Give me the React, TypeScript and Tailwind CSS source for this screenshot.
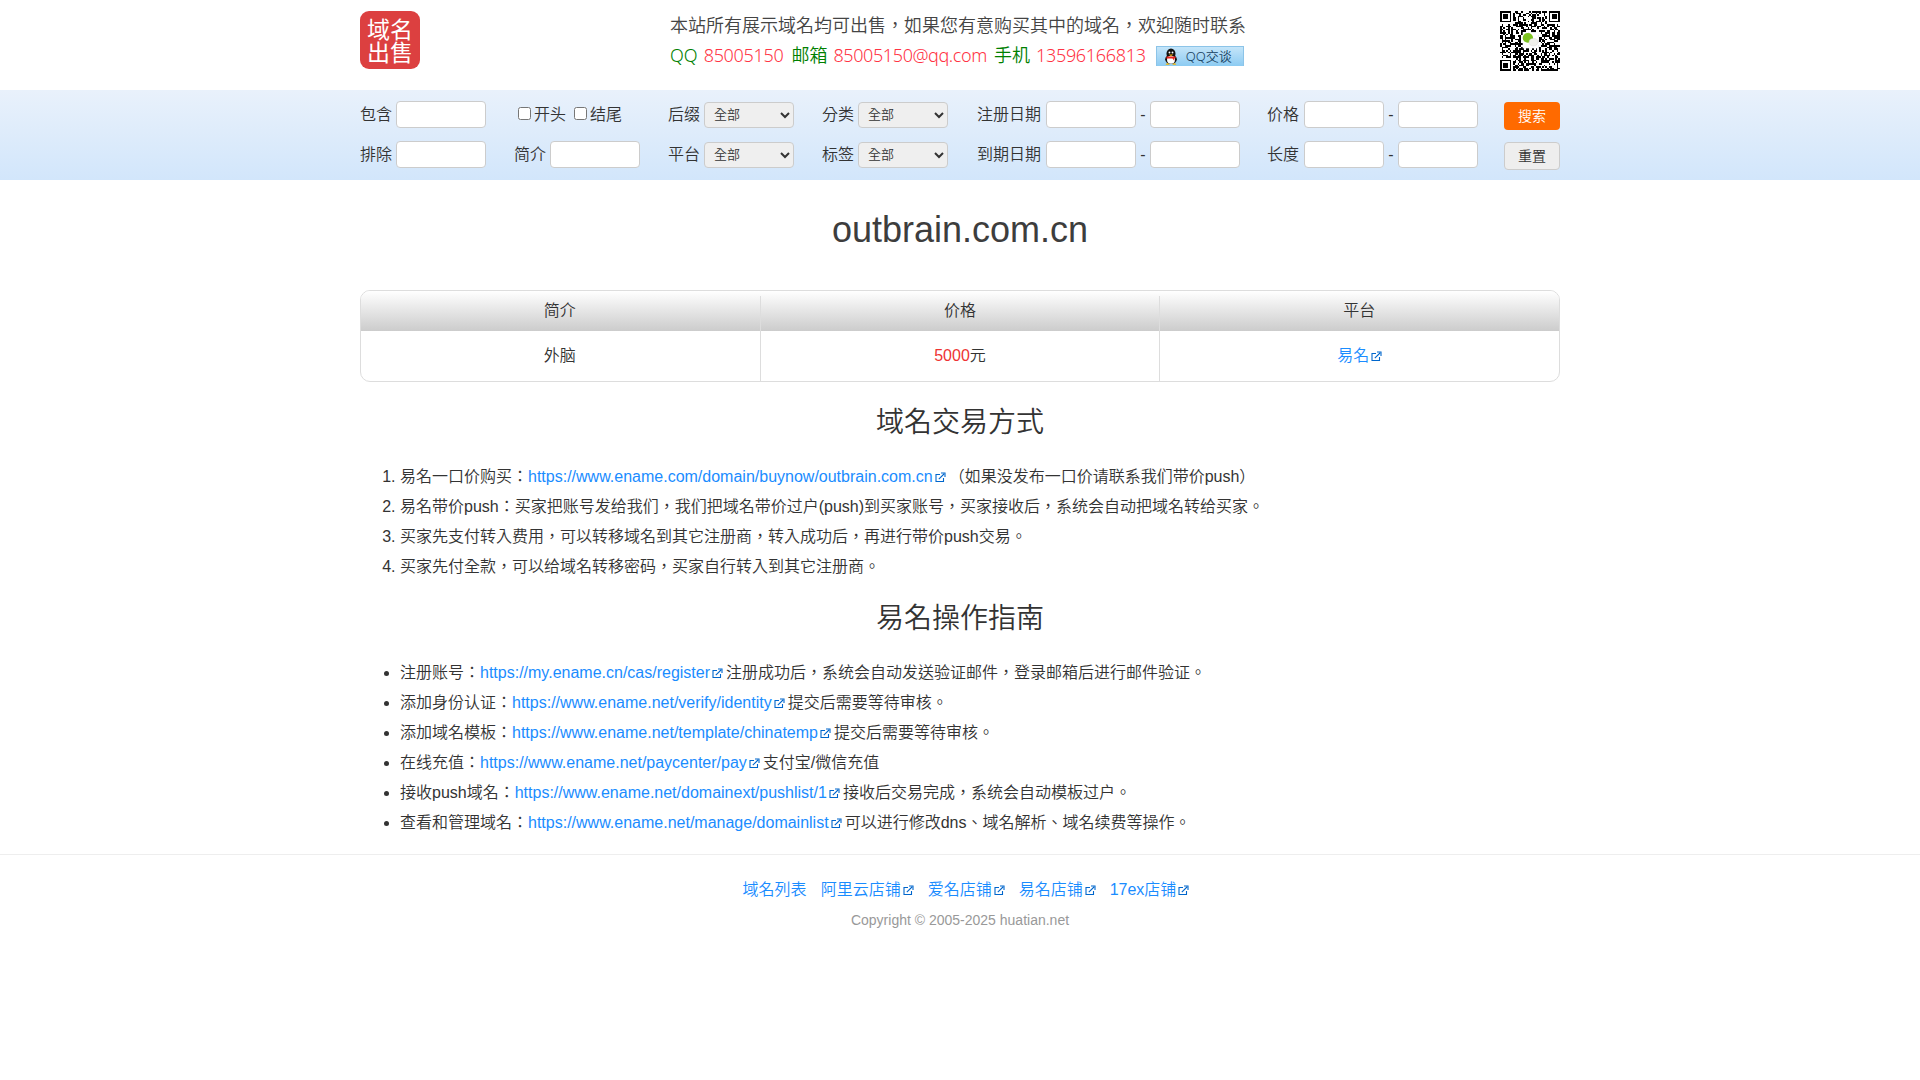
import type { ReactNode } from "react";

const cjk = "font-['Liberation_Sans','Noto_Sans_CJK_TC',sans-serif]";

function ExternalIcon() {
  return (
    <svg viewBox="0 0 11 11" className="inline-block w-[11px] h-[11px] ml-[2px] mr-[3px] align-[-1px]" fill="none" stroke="#0066cc">
      <path d="M5 2.5H1V9.5H8.5V6" strokeWidth="1.1" />
      <path d="M3.8 7.2L9 2M6 1H10V5" strokeWidth="1.1" />
    </svg>
  );
}

function Ext({ href, children }: { href?: string; children: ReactNode }) {
  return (
    <a href={href ?? "#"} className="text-[#1a8cff]">
      {children}
      <ExternalIcon />
    </a>
  );
}

function Field({ className }: { className?: string }) {
  return <input type="text" className={`shrink-0 h-[27px] bg-white border border-[#ccc] rounded-[4px] ${className ?? "w-[90px]"}`} />;
}

function Pick() {
  return (
    <select className="shrink-0 w-[90px] h-[26px] bg-[#efefef] border border-[#ccc] rounded-[4px] text-[13px] text-[#333] pl-[5px]">
      <option>全部</option>
    </select>
  );
}

function Label({ children }: { children: ReactNode }) {
  return <span className="mr-1 whitespace-nowrap">{children}</span>;
}

function Dash() {
  return <span className="w-[14px] text-center shrink-0">-</span>;
}

// deterministic fake QR modules, the real one is a picture
function qrPath() {
  const n = 37;
  let d = "";
  let seed = 20250;
  const inFinder = (x: number, y: number) =>
    (x < 8 && y < 8) || (x >= n - 8 && y < 8) || (x < 8 && y >= n - 8);
  for (let y = 0; y < n; y++) {
    for (let x = 0; x < n; x++) {
      seed = (seed * 1103515245 + 12345) & 0x7fffffff;
      if (!inFinder(x, y) && (seed >> 16) % 100 < 52) d += `M${x} ${y}h1v1h-1z`;
    }
  }
  return d;
}

function Finder({ x, y }: { x: number; y: number }) {
  return (
    <g>
      <rect x={x + 0.5} y={y + 0.5} width="6" height="6" fill="none" stroke="#000" />
      <rect x={x + 2} y={y + 2} width="3" height="3" fill="#000" />
    </g>
  );
}

function QrCode() {
  return (
    <svg viewBox="0 0 37 37" className="w-[60px] h-[60px] mt-[11px]" shapeRendering="crispEdges">
      <path d={qrPath()} fill="#000" />
      <Finder x={0} y={0} />
      <Finder x={30} y={0} />
      <Finder x={0} y={30} />
      <g shapeRendering="auto">
        <rect x="14" y="13" width="10" height="10" fill="#fff" />
        <ellipse cx="17.2" cy="16.6" rx="3.2" ry="3" fill="#7cc31f" />
        <ellipse cx="20.6" cy="19.2" rx="2.7" ry="2.3" fill="#f1f1ec" stroke="#ccc" strokeWidth="0.2" />
      </g>
    </svg>
  );
}

function Penguin() {
  return (
    <svg viewBox="0 0 16 18" className="w-[16px] h-[17px] shrink-0">
      <ellipse cx="8" cy="6" rx="4.8" ry="5.6" fill="#111" />
      <ellipse cx="8" cy="12" rx="6.2" ry="5" fill="#111" />
      <ellipse cx="8" cy="12.5" rx="4.2" ry="4.2" fill="#fff" />
      <circle cx="6.4" cy="4.8" r="1" fill="#fff" />
      <circle cx="9.6" cy="4.8" r="1" fill="#fff" />
      <path d="M5.5 6.8H10.5L8 8.4Z" fill="#f5b400" />
      <path d="M3.2 9H12.8L13 10.6L11.4 11V13.6L9.6 11H3.2Z" fill="#e8261f" />
      <path d="M2.4 17.8C3 15.8 5 15.6 6.6 17.8ZM13.6 17.8C13 15.8 11 15.6 9.4 17.8Z" fill="#f5b400" />
    </svg>
  );
}

export default function App() {
  return (
    <div className={`min-h-[1080px] bg-white text-[16px] font-[350] text-[#333] ${cjk}`}>
      {/* Header */}
      <div className="w-[1200px] mx-auto h-[90px] flex">
        <div className="w-[60px] h-[58px] mt-[11px] rounded-[9px] bg-[#dc4040] text-white flex items-center justify-center font-['Noto_Sans_CJK_SC',sans-serif]">
          <span className="text-[23px] leading-[23px] font-normal text-center">
            域名
            <br />
            出售
          </span>
        </div>
        <div className="ml-[250px] w-[580px] font-['Noto_Sans','Noto_Sans_CJK_TC',sans-serif]">
          <div className="mt-[12px] text-[18px] leading-[26px] text-[#444] whitespace-nowrap">
            本站所有展示域名均可出售，如果您有意购买其中的域名，欢迎随时联系
          </div>
          <div className="flex items-end h-[28px] mt-[2px] text-[18px] leading-[26px] whitespace-nowrap">
            <span className="text-[#008000]">QQ</span>
            <span className="text-[#ff3344] ml-[6px] tracking-[-0.3px]">85005150</span>
            <span className="text-[#008000] ml-[8px]">邮箱</span>
            <span className="text-[#ff3344] ml-[6px] tracking-[-0.4px]">85005150@qq.com</span>
            <span className="text-[#008000] ml-[7px]">手机</span>
            <span className="text-[#ff3344] ml-[6px] tracking-[-0.3px]">13596166813</span>
            <span className="ml-[10px] mb-[2px] w-[88px] h-[20px] flex items-center pl-[6px] gap-[7px] bg-gradient-to-b from-[#c4e5f9] to-[#8ccbf2] border-t border-x border-[#8cc4e8] text-[13px] leading-none text-[#16405e]">
              <Penguin />
              QQ交谈
            </span>
          </div>
        </div>
        <div className="ml-auto">
          <QrCode />
        </div>
      </div>

      {/* Search */}
      <div className="h-[90px] bg-gradient-to-b from-[#e9f1fb] to-[#d2e6fb] pt-[11px]">
        <div className="w-[1200px] mx-auto flex">
          <div className="w-[126px] flex flex-col gap-[13px]">
            <div className="h-[27px] flex items-center"><Label>包含</Label><Field /></div>
            <div className="h-[27px] flex items-center"><Label>排除</Label><Field /></div>
          </div>
          <div className="w-[126px] ml-[28px] flex flex-col gap-[13px]">
            <div className="h-[27px] flex items-center pl-[4px] whitespace-nowrap">
              <input type="checkbox" className="w-[13px] h-[13px] mb-[3px]" />
              <span className="ml-[3px]">开头</span>
              <input type="checkbox" className="w-[13px] h-[13px] mb-[3px] ml-[8px]" />
              <span className="ml-[3px]">结尾</span>
            </div>
            <div className="h-[27px] flex items-center"><Label>简介</Label><Field /></div>
          </div>
          <div className="w-[126px] ml-[28px] flex flex-col gap-[13px]">
            <div className="h-[27px] flex items-center"><Label>后缀</Label><Pick /></div>
            <div className="h-[27px] flex items-center"><Label>平台</Label><Pick /></div>
          </div>
          <div className="w-[126px] ml-[28px] flex flex-col gap-[13px]">
            <div className="h-[27px] flex items-center"><Label>分类</Label><Pick /></div>
            <div className="h-[27px] flex items-center"><Label>标签</Label><Pick /></div>
          </div>
          <div className="w-[263px] ml-[29px] flex flex-col gap-[13px]">
            <div className="h-[27px] flex items-center"><Label>注册日期</Label><Field className="w-[90px] ml-px" /><Dash /><Field /></div>
            <div className="h-[27px] flex items-center"><Label>到期日期</Label><Field className="w-[90px] ml-px" /><Dash /><Field /></div>
          </div>
          <div className="w-[211px] ml-[27px] flex flex-col gap-[13px]">
            <div className="h-[27px] flex items-center"><Label>价格</Label><Field className="w-[80px] ml-px" /><Dash /><Field className="w-[80px]" /></div>
            <div className="h-[27px] flex items-center"><Label>长度</Label><Field className="w-[80px] ml-px" /><Dash /><Field className="w-[80px]" /></div>
          </div>
          <div className="w-[56px] ml-[26px] flex flex-col gap-[12px] pt-[1px]">
            <button className="h-[28px] rounded-[4px] bg-[#ff6a00] text-white text-[14px]">搜索</button>
            <button className="h-[28px] rounded-[4px] bg-[#eee] border border-[#ccc] text-[#333] text-[14px]">重置</button>
          </div>
        </div>
      </div>

      {/* Main */}
      <div className="w-[1200px] mx-auto">
        <h1 className="text-[36px] leading-[40px] text-center mt-[30px] text-[#3d3d3d]">outbrain.com.cn</h1>

        <div className="mt-[40px] border border-[#ddd] rounded-[10px] overflow-hidden">
          <div className="grid grid-cols-3 h-[40px] bg-gradient-to-b from-white to-[#ccc] text-center leading-[40px]">
            <div className="pr-[2px]">简介</div>
            <div className="relative">
              <span className="absolute left-0 top-[5px] bottom-0 w-px bg-[#ddd]" />
              价格
              <span className="absolute right-0 top-[5px] bottom-0 w-px bg-[#ddd]" />
            </div>
            <div>平台</div>
          </div>
          <div className="grid grid-cols-3 h-[50px] text-center leading-[50px]">
            <div className="pr-[2px]">外脑</div>
            <div className="border-x border-[#ddd]">
              <span className="text-[#e33]">5000</span>元
            </div>
            <div className="pl-[4px]">
              <Ext>易名</Ext>
            </div>
          </div>
        </div>

        <h2 className="text-[28px] leading-[40px] text-center mt-[21px]">域名交易方式</h2>
        <ol className="list-decimal pl-[40px] mt-[19px] leading-[30px]">
          <li>
            易名一口价购买：<Ext>https://www.ename.com/domain/buynow/outbrain.com.cn</Ext>（如果没发布一口价请联系我们带价push）
          </li>
          <li>易名带价push：买家把账号发给我们，我们把域名带价过户(push)到买家账号，买家接收后，系统会自动把域名转给买家。</li>
          <li>买家先支付转入费用，可以转移域名到其它注册商，转入成功后，再进行带价push交易。</li>
          <li>买家先付全款，可以给域名转移密码，买家自行转入到其它注册商。</li>
        </ol>

        <h2 className="text-[28px] leading-[40px] text-center mt-[17px]">易名操作指南</h2>
        <ul className="list-disc pl-[40px] mt-[19px] leading-[30px]">
          <li>注册账号：<Ext>https://my.ename.cn/cas/register</Ext>注册成功后，系统会自动发送验证邮件，登录邮箱后进行邮件验证。</li>
          <li>添加身份认证：<Ext>https://www.ename.net/verify/identity</Ext>提交后需要等待审核。</li>
          <li>添加域名模板：<Ext>https://www.ename.net/template/chinatemp</Ext>提交后需要等待审核。</li>
          <li>在线充值：<Ext>https://www.ename.net/paycenter/pay</Ext>支付宝/微信充值</li>
          <li>接收push域名：<Ext>https://www.ename.net/domainext/pushlist/1</Ext>接收后交易完成，系统会自动模板过户。</li>
          <li>查看和管理域名：<Ext>https://www.ename.net/manage/domainlist</Ext>可以进行修改dns、域名解析、域名续费等操作。</li>
        </ul>
      </div>

      {/* Footer */}
      <div className="mt-[16px] border-t border-[#eee] pt-[20px] text-center">
        <div className="leading-[30px] flex justify-center gap-[11px] pl-[15px]">
          <a href="#" className="text-[#1a8cff] mr-[3px]">域名列表</a>
          <Ext>阿里云店铺</Ext>
          <Ext>爱名店铺</Ext>
          <Ext>易名店铺</Ext>
          <Ext>17ex店铺</Ext>
        </div>
        <div className="text-[14px] leading-[30px] text-[#999]">Copyright © 2005-2025 huatian.net</div>
      </div>
    </div>
  );
}
